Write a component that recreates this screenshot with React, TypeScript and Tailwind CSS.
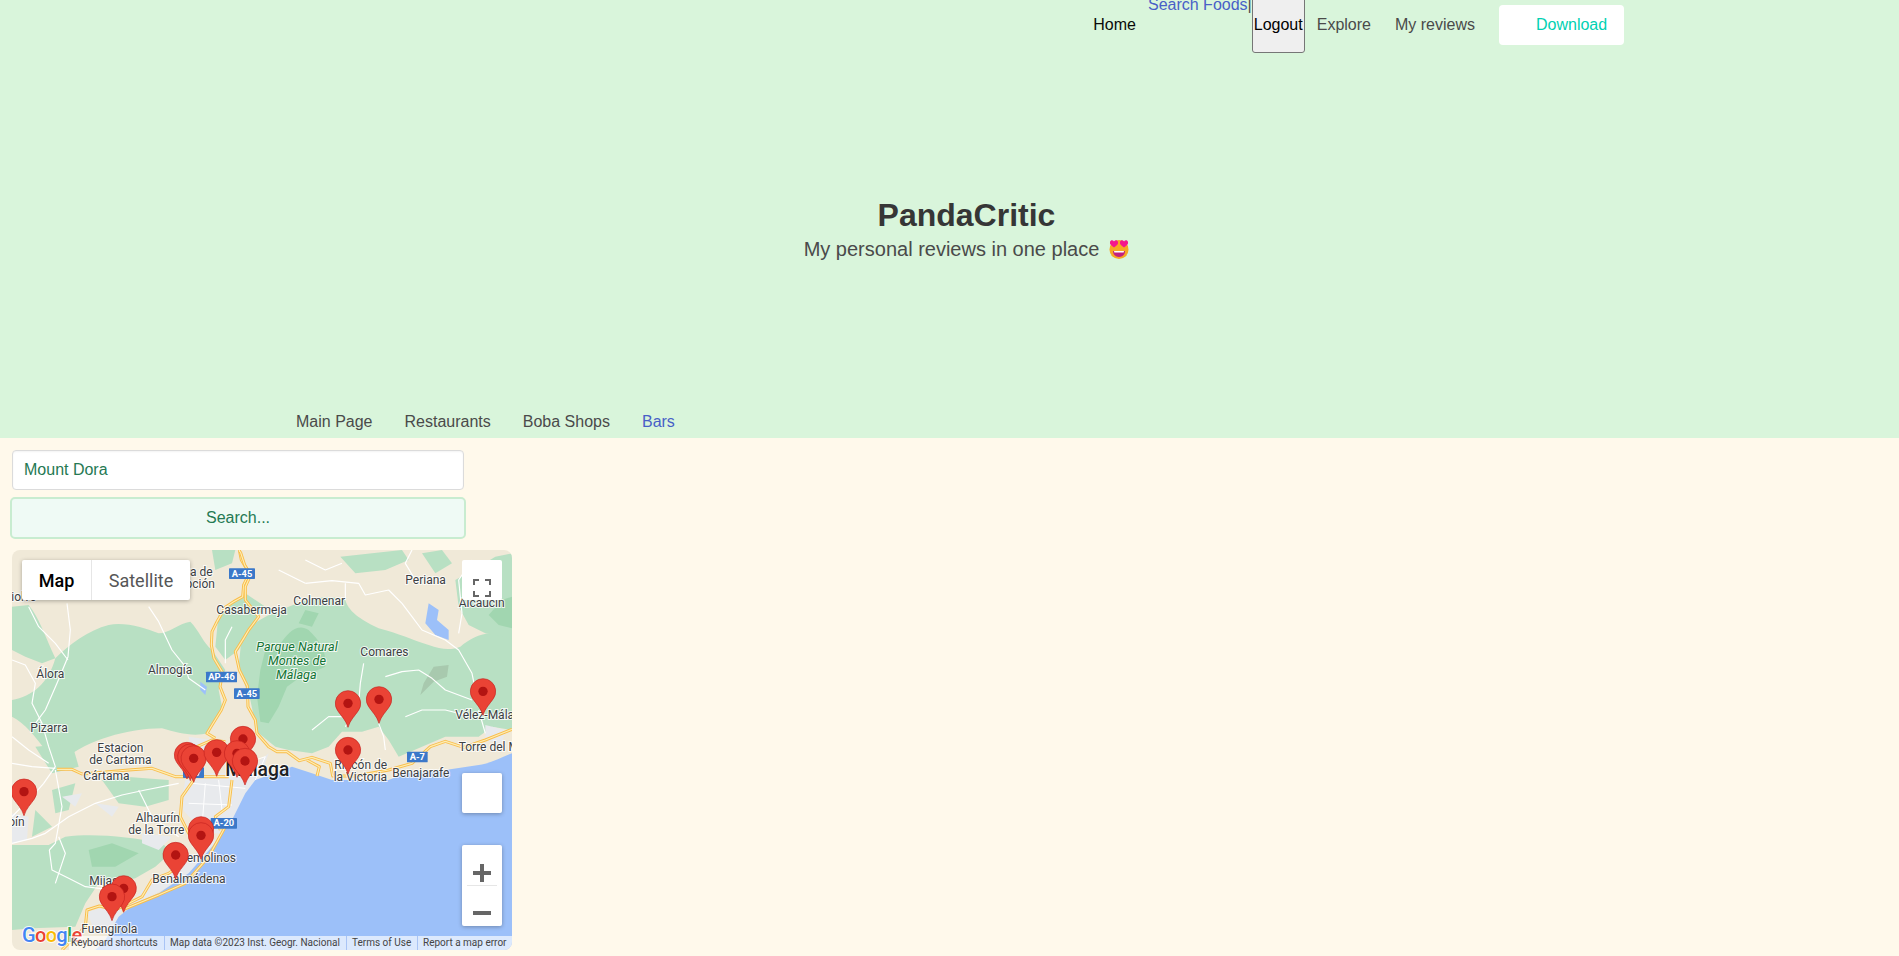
const greens = [
  // big mass west of the A-45
  "M130,325 C170,285 230,240 290,225 C340,215 400,235 440,250 C470,250 500,220 535,215 C560,240 575,280 600,300 L640,360 L620,420 L630,470 L590,550 C540,560 500,550 450,535 C400,535 340,545 290,560 C240,575 190,600 160,625 L100,600 C70,560 40,520 0,500 L0,450 C60,440 110,400 130,325 Z",
  "M0,170 L50,165 C80,200 100,260 130,325 L90,340 L40,320 L0,300 Z",
  // park and everything east of it
  "M690,250 C730,215 770,190 830,170 C880,150 940,130 1000,150 C1010,190 1060,215 1100,235 C1160,250 1200,270 1250,285 C1290,300 1320,300 1345,290 C1370,270 1400,250 1440,250 L1500,260 L1500,540 L1440,530 L1400,560 L1300,560 L1230,590 L1160,620 L1130,570 L1100,530 L1050,545 L990,545 L950,590 L900,610 L830,600 L790,590 L735,545 L715,450 L680,350 Z",
  "M1330,90 L1400,50 L1450,20 L1500,10 L1500,265 L1420,250 L1370,225 L1340,170 Z",
  "M985,20 L1080,10 L1170,0 L1190,30 L1120,60 L1030,70 Z",
  "M1230,10 L1290,0 L1320,40 L1270,70 Z",
  "M600,0 L670,0 L660,40 L610,60 Z",
  "M620,190 L700,130 L760,170 L720,230 L680,300 L640,330 L610,290 Z",
  "M0,885 L110,885 L160,860 C250,850 350,860 450,880 L480,905 L430,950 L370,985 L300,1000 L260,1000 L220,1060 L190,1130 L60,1135 L0,1140 Z",
  "M270,690 L340,680 L470,690 L470,750 L400,770 L320,760 Z",
  "M70,590 L180,580 L200,650 L120,670 Z",
  "M120,720 L190,700 L170,780 L130,790 Z",
  "M70,780 L120,830 L60,860 Z",
];

const darkGreens = [
  "M800,290 C830,240 860,220 890,240 C920,270 945,300 940,350 L860,385 L825,410 L800,470 L770,520 L745,515 L735,440 L745,360 L760,300 Z",
  "M1430,195 L1470,150 L1500,140 L1500,235 L1460,225 Z",
  "M230,900 L300,880 L380,910 L310,950 L240,950 Z",
  "M880,180 L920,190 L900,230 L860,220 Z",
];

const urban = [
  "M520,690 L600,670 L720,670 L745,630 L770,610 L745,680 L715,720 L680,780 L630,850 L590,850 L540,810 L505,770 Z",
  "M225,1085 L340,1060 L305,1130 L250,1150 Z",
  "M390,1020 L500,950 L620,860 L560,950 L450,1020 L350,1070 Z",
  "M0,790 L50,800 L45,870 L0,880 Z",
  "M1420,525 L1480,540 L1470,580 L1420,572 Z",
  "M530,560 L600,570 L600,600 L540,620 Z",
  "M150,740 L210,730 L190,770 Z",
  "M250,760 L320,770 L300,800 Z",
  "M390,850 L480,860 L440,900 L390,880 Z",
];

const highways = [
  "M682,0 L688,30 L712,70 L695,105 L692,140 L665,155 L640,172 L615,215 L600,245 L598,285 L606,325 L632,368 L624,410 L640,450 L628,480 L600,525 L585,550 L610,565",
  "M685,5 L698,45 L716,75 L700,110 L700,150 L740,200 L710,240 L695,265 L670,305 L682,360 L706,408 L708,470 L730,510 L735,550 L770,590 L795,605 L825,605 L862,632 L900,622 L955,640 L962,678 L1030,678 L1130,660 L1200,640 L1255,590 L1300,574 L1355,592 L1420,570 L1500,538",
  "M135,658 L180,658 L210,672 L350,660 L420,655 L490,680 L650,680",
  "M555,590 L600,570 L640,575",
  "M545,690 L510,740 L505,800 L530,850 L545,860",
  "M660,690 L650,770 L610,800 L625,840",
  "M150,1200 L220,1130 L225,1080 L262,1068 L310,1080 L390,1040 L420,990 L470,970 L510,940",
  "M330,1080 L440,1035 L520,1000 L590,920 L640,830",
  "M885,630 L922,650 L915,678",
];

const roads = [
  "M0,330 L40,345 L70,400 L60,460 L90,520 L110,590 L130,650 L95,700 L60,740 L0,800",
  "M165,160 L175,240 L168,320 L135,400 L100,480 L70,520",
  "M0,880 L60,865 L100,850 L170,800 L250,760 L330,735 L400,720 L500,700",
  "M112,900 L120,960 L170,985 L220,1010 L300,1020",
  "M50,170 L80,230 L130,280 L168,330",
  "M410,170 L440,215 L480,300 L520,350 L530,385 L580,420",
  "M880,100 L960,92 L1040,100 L1060,135 L1130,120 L1170,160 L1200,200 L1230,240 L1300,270 L1340,300 L1380,370 L1390,420",
  "M800,60 L880,100",
  "M1000,150 L1000,100",
  "M1340,250 L1350,190",
  "M1120,380 L1170,365 L1220,360 L1260,385 L1300,420 L1380,450",
  "M1055,340 L1045,400 L1040,460 L1000,530",
  "M1100,520 L1115,560 L1120,600",
  "M1420,550 L1400,480",
  "M1200,0 L1180,40 L1210,90",
  "M130,660 L150,770 L130,880 L112,900",
  "M380,720 L420,800 L500,860",
  "M0,560 L50,600 L110,640",
  "M0,640 L60,650 L130,655",
  "M660,230 L640,270 L640,340",
  "M1180,500 L1230,480 L1300,480 L1380,500",
  "M900,540 L950,500 L1010,500",
  "M880,30 L940,60 L990,40",
  "M1380,30 L1340,90 L1350,190",
  "M140,860 L160,910 L130,1000",
];

const streets = [
  "M540,700 L700,715",
  "M530,760 L660,765",
  "M580,700 L570,830",
  "M620,690 L630,780",
  "M700,640 L760,620 L730,690",
];

const labels: { t: string; x: number; y: number; end?: boolean }[] = [
  { t: "Villanueva de", x: 602, y: 78, end: true },
  { t: "la Concepción", x: 609, y: 113, end: true },
  { t: "iolve", x: -2, y: 152 },
  { t: "Casabermeja", x: 613, y: 192 },
  { t: "Colmenar", x: 844, y: 165 },
  { t: "Periana", x: 1180, y: 102 },
  { t: "Alcaucín", x: 1340, y: 172 },
  { t: "Comares", x: 1045, y: 318 },
  { t: "Almogía", x: 408, y: 372 },
  { t: "Álora", x: 73, y: 384 },
  { t: "Pizarra", x: 55, y: 546 },
  { t: "Estacion", x: 256, y: 606 },
  { t: "de Cartama", x: 232, y: 642 },
  { t: "Cártama", x: 214, y: 690 },
  { t: "Coín", x: 38, y: 828, end: true },
  { t: "Alhaurín", x: 371, y: 816 },
  { t: "de la Torre", x: 349, y: 852 },
  { t: "Torremolinos", x: 672, y: 936, end: true },
  { t: "Benalmádena", x: 421, y: 998 },
  { t: "Mijas", x: 232, y: 1005 },
  { t: "Fuengirola", x: 208, y: 1148 },
  { t: "Vélez-Málaga", x: 1330, y: 506 },
  { t: "Torre del Mar", x: 1340, y: 602 },
  { t: "Benajarafe", x: 1141, y: 680 },
  { t: "Rincón de", x: 967, y: 658 },
  { t: "la Victoria", x: 965, y: 693 },
];

const shields = [
  { t: "A-45", x: 651, y: 55, w: 78 },
  { t: "AP-46", x: 582, y: 365, w: 93 },
  { t: "A-45", x: 666, y: 415, w: 77 },
  { t: "A-7", x: 1185, y: 605, w: 62 },
  { t: "A-20", x: 596, y: 804, w: 79 },
  { t: "A-7", x: 513, y: 652, w: 63 },
];

const pins = [
  [36, 725],
  [525, 615],
  [535, 620],
  [545, 625],
  [693, 567],
  [614, 607],
  [675, 610],
  [699, 633],
  [567, 838],
  [567, 856],
  [491, 915],
  [335, 1015],
  [300, 1040],
  [1008, 460],
  [1101, 448],
  [1413, 424],
  [1008, 600],
];

function MapDrawing() {
  return (
    <svg viewBox="0 0 1500 1200" className="absolute inset-0 h-full w-full" style={{ fontFamily: "Roboto, sans-serif" }}>
      <rect width="1500" height="1200" fill="#f0e9d8" />
      {greens.map((d) => (
        <path key={d} d={d} fill="#b8e0c3" />
      ))}
      {darkGreens.map((d) => (
        <path key={d} d={d} fill="#a1d6b0" />
      ))}
      {urban.map((d) => (
        <path key={d} d={d} fill="#e8eaed" />
      ))}
      <path d="M1250,160 L1280,180 L1275,210 L1310,240 L1310,270 L1270,255 L1240,220 Z" fill="#9cc0f9" />
      <path d="M565,395 L585,410 L580,435 L565,420 Z" fill="#9cc0f9" />
      <path d="M1265,350 L1310,345 L1305,380 L1265,395 L1225,435 L1235,400 Z" fill="#a8c9ae" />
      <path d="M1500,610 C1470,620 1440,640 1400,645 L1300,660 L1180,670 L1130,690 L960,690 L900,670 L840,650 L800,665 L730,690 L700,730 L660,810 L600,890 L530,970 L440,1030 L370,1060 L320,1100 L280,1170 L250,1200 L1500,1200 Z" fill="#9cc0f9" />
      {streets.map((d) => (
        <path key={d} d={d} fill="none" stroke="#ffffff" strokeWidth="3" />
      ))}
      {roads.map((d) => (
        <path key={d} d={d} fill="none" stroke="#ffffff" strokeWidth="3.5" strokeLinejoin="round" />
      ))}
      {highways.map((d) => (
        <g key={d} fill="none" strokeLinejoin="round">
          <path d={d} stroke="#f9bd4a" strokeWidth="9" />
          <path d={d} stroke="#feedb3" strokeWidth="3.5" />
        </g>
      ))}
      {shields.map((s) => (
        <g key={s.x}>
          <rect x={s.x} y={s.y} width={s.w} height="32" rx="2" fill="#3b78c9" />
          <text x={s.x + s.w / 2} y={s.y + 25} textAnchor="middle" fontSize="28" fontWeight="700" fill="#ffffff">
            {s.t}
          </text>
        </g>
      ))}
      {labels.map((l) => (
        <text
          key={l.t}
          x={l.x}
          y={l.y}
          textAnchor={l.end ? "end" : "start"}
          fontSize="36"
          fill="#3c4043"
          stroke="#ffffff"
          strokeWidth="6"
          strokeOpacity="0.8"
          paintOrder="stroke"
        >
          {l.t}
        </text>
      ))}
      <g fontSize="38" fontStyle="italic" fill="#137333" stroke="#ffffff" strokeWidth="6" strokeOpacity="0.8" paintOrder="stroke" textAnchor="middle">
        <text x="855" y="304">Parque Natural</text>
        <text x="855" y="346">Montes de</text>
        <text x="853" y="388">Málaga</text>
      </g>
      <text x="640" y="677" fontSize="58" fontWeight="500" fill="#202124" stroke="#ffffff" strokeWidth="6" strokeOpacity="0.8" paintOrder="stroke">
        Málaga
      </text>
      {pins.map(([x, y]) => (
        <g key={`${x}-${y}`} transform={`translate(${x} ${y})`}>
          <path d="M0,72 C-6,50 -22,36 -31,22 A38,38 0 1 1 31,22 C22,36 6,50 0,72 Z" fill="#ea4335" stroke="#c5221f" strokeWidth="2" />
          <circle r="14" fill="#b31412" />
        </g>
      ))}
      <text x="30" y="1176" fontSize="60" fontWeight="500" letterSpacing="-2" stroke="#ffffff" strokeWidth="6" strokeOpacity="0.85" paintOrder="stroke">
        <tspan fill="#4285f4">G</tspan>
        <tspan fill="#ea4335">o</tspan>
        <tspan fill="#fbbc04">o</tspan>
        <tspan fill="#4285f4">g</tspan>
        <tspan fill="#34a853">l</tspan>
        <tspan fill="#ea4335">e</tspan>
      </text>
    </svg>
  );
}

function MapPanel() {
  return (
    <div className="relative h-[400px] w-[500px] overflow-hidden rounded-[8px] font-['Roboto',sans-serif]">
      <MapDrawing />

      <div className="absolute left-[10px] top-[10px] flex h-10 w-[168px] rounded-[2px] bg-white text-[18px] shadow-[0_1px_4px_rgba(0,0,0,0.3)]">
        <div className="flex w-[70px] items-center justify-center border-r border-[#e6e6e6] font-medium text-black">Map</div>
        <div className="flex flex-1 items-center justify-center text-[#565656]">Satellite</div>
      </div>

      <div className="absolute left-[450px] top-[10px] flex h-10 w-10 justify-center rounded-[2px] bg-white pt-[19px]">
        <svg width="18" height="18" viewBox="0 0 18 18" fill="none" stroke="#666666" strokeWidth="2">
          <path d="M1,6 V1 H6 M12,1 H17 V6 M17,12 V17 H12 M6,17 H1 V12" />
        </svg>
      </div>

      <div className="absolute left-[450px] top-[223px] h-10 w-10 rounded-[2px] bg-white shadow-[0_1px_4px_rgba(0,0,0,0.3)]" />

      <div className="absolute left-[450px] top-[295px] flex h-[81px] w-10 flex-col items-center rounded-[2px] bg-white shadow-[0_1px_4px_rgba(0,0,0,0.3)]">
        <div className="flex h-10 w-full items-end justify-center pb-[3px]">
          <svg width="18" height="18" viewBox="0 0 18 18" fill="#666666">
            <path d="M7,0 H11 V7 H18 V11 H11 V18 H7 V11 H0 V7 H7 Z" />
          </svg>
        </div>
        <div className="h-px w-[30px] bg-[#e6e6e6]" />
        <div className="flex h-10 w-full items-start justify-center pt-[18px]">
          <svg width="18" height="18" viewBox="0 0 18 18" fill="#666666">
            <path d="M0,7 H18 V11 H0 Z" />
          </svg>
        </div>
      </div>

      <div className="absolute bottom-0 right-0 flex h-[14px] w-[443px] items-center bg-white/65 text-[10px] leading-[14px] text-[#444444]">
        <span className="w-[95px] pl-[2px]">Keyboard shortcuts</span>
        <span className="w-[182px] border-l border-[#a9c4f5] pl-[5px]">Map data ©2023 Inst. Geogr. Nacional</span>
        <span className="w-[71px] border-l border-[#a9c4f5] pl-[5px]">Terms of Use</span>
        <span className="flex-1 border-l border-[#a9c4f5] pl-[5px]">Report a map error</span>
      </div>
    </div>
  );
}

function HeartEyes() {
  return (
    <svg width="20" height="20" viewBox="0 0 20 20" className="ml-[10px] inline-block align-[-3px]">
      <circle cx="10" cy="10.5" r="9.5" fill="#f7a823" />
      <path d="M4,12 H16 C16,16 13,18 10,18 C7,18 4,16 4,12 Z" fill="#c2207f" />
      <path d="M5,12 H15 L14.6,13.4 H5.4 Z" fill="#ffffff" />
      <path d="M5,8.5 C2,6.5 0.5,5 1,3 C1.5,0.8 4,0.8 5,2.5 C6,0.8 8.5,0.8 9,3 C9.5,5 8,6.5 5,8.5 Z" fill="#f5168c" />
      <path d="M15,8.5 C12,6.5 10.5,5 11,3 C11.5,0.8 14,0.8 15,2.5 C16,0.8 18.5,0.8 19,3 C19.5,5 18,6.5 15,8.5 Z" fill="#f5168c" />
    </svg>
  );
}

export default function App() {
  return (
    <div className="min-h-screen overflow-hidden bg-[#fff9eb] font-['Liberation_Sans',Arial,sans-serif] text-base text-[#4a4a4a]">
      <section className="flex h-[438px] flex-col bg-[#d9f5db]">
        <nav className="flex h-[50px] items-center justify-end pr-[275px]">
          <a className="mr-3 text-[#0a0a0a]">Home</a>
          <span className="-mt-[7px] self-start leading-6">
            <a className="text-[#485fc7]">Search Foods</a>|
          </span>
          <button className="h-[56px] w-[53px] rounded-[3px] border border-[#767676] bg-[#efefef] text-black">Logout</button>
          <a className="ml-3">Explore</a>
          <a className="ml-6">My reviews</a>
          <a className="ml-6 flex h-10 w-[125px] items-center rounded-[4px] bg-white pl-[37px] text-[#00d1b2]">Download</a>
        </nav>

        <div className="flex flex-1 flex-col items-center justify-center pl-[34px]">
          <h1 className="text-[32px] font-bold leading-10 text-[#363636]">PandaCritic</h1>
          <p className="mt-[2px] text-[20px] leading-6">
            My personal reviews in one place
            <HeartEyes />
          </p>
        </div>

        <div className="flex h-[33px] items-center gap-8 pl-[296px]">
          <a>Main Page</a>
          <a>Restaurants</a>
          <a>Boba Shops</a>
          <a className="text-[#485fc7]">Bars</a>
        </div>
      </section>

      <main className="pl-3 pt-3">
        <div className="flex h-10 w-[452px] items-center rounded-[4px] border border-[#dbdbdb] bg-white pl-[11px] text-[#257953] shadow-[inset_0_1px_2px_rgba(10,10,10,0.05)]">
          Mount Dora
        </div>
        <button className="-ml-[2px] mt-[7px] block h-[42px] w-[456px] rounded-[5px] border-2 border-[#c8ecd0] bg-[#effaf5] text-[#257953]">
          Search...
        </button>
        <div className="mt-[11px]">
          <MapPanel />
        </div>
      </main>
    </div>
  );
}
